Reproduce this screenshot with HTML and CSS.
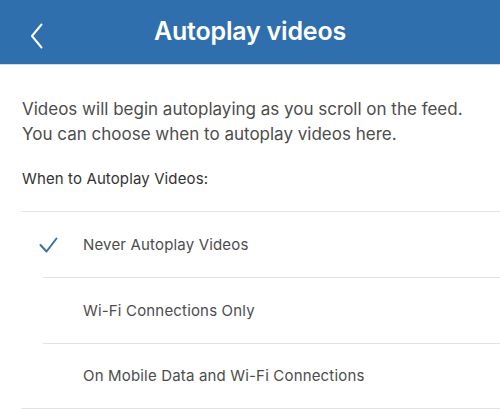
FILE: index.html
```html
<!DOCTYPE html>
<html>
<head>
<meta charset="utf-8">
<link rel="stylesheet" href="styles.css">
</head>
<body>
<header class="nav">
  <svg class="back" width="14" height="26" viewBox="0 0 14 26"><path d="M11.5 1.5 L2 13 L11.5 24.5" fill="none" stroke="#fff" stroke-width="2" stroke-linecap="round" stroke-linejoin="round"/></svg>
  <h1 class="title">Autoplay videos</h1>
</header>
<main class="content">
  <p class="desc">Videos will begin autoplaying as you scroll on the feed.<br>You can choose when to autoplay videos here.</p>
  <div class="label">When to Autoplay Videos:</div>
  <ul class="options">
    <li class="option selected">
      <span class="check"><svg width="20" height="16" viewBox="0 0 20 16"><path d="M1.5 8 L7.5 14.5 L17.5 1.5" fill="none" stroke="#3a72a0" stroke-width="2" stroke-linecap="round" stroke-linejoin="round"/></svg></span>
      <span class="text">Never Autoplay Videos</span>
    </li>
    <li class="option">
      <span class="check"></span>
      <span class="text">Wi-Fi Connections Only</span>
    </li>
    <li class="option">
      <span class="check"></span>
      <span class="text">On Mobile Data and Wi-Fi Connections</span>
    </li>
  </ul>
</main>
</body>
</html>
```
FILE: styles.css
```css
* { box-sizing: border-box; }
html, body { margin: 0; padding: 0; background: #fff; }
body { font-family: Inter, "Noto Sans", sans-serif; width: 500px; height: 409px; overflow: hidden; }
.nav {
  height: 65px;
  background: #2f6fad;
  border-bottom: 1px solid #c9def0;
  display: flex;
  align-items: center;
  justify-content: center;
  position: relative;
}
.back { position: absolute; left: 30px; top: 23px; }
.title {
  margin: 0;
  color: #fff;
  font-size: 25px;
  font-weight: 600;
  letter-spacing: -0.2px;
  padding-bottom: 2px;
}
.content { padding-left: 22px; }
.desc {
  margin: 0;
  padding-top: 32px;
  font-size: 17px;
  line-height: 25px;
  color: #4d4d4d;
}
.label {
  margin-top: 22px;
  font-size: 15px;
  letter-spacing: 0.12px;
  color: #333;
  line-height: 20px;
}
.options {
  list-style: none;
  margin: 22px 0 0 -1px;
  padding: 0;
  border-top: 1.5px solid #e2e2e2;
  border-bottom: 1.5px solid #e2e2e2;
}
.option {
  height: 65.3px;
  display: flex;
  align-items: center;
  position: relative;
}
.option + .option { border-top: 1.5px solid #e2e2e2; margin-left: 22px; }
.option + .option .check { width: 40px; padding-left: 0; }
.check { width: 62px; padding-left: 18px; display: flex; align-items: center; }
.text { font-size: 15px; letter-spacing: 0.17px; color: #4d4d4d; }
```
